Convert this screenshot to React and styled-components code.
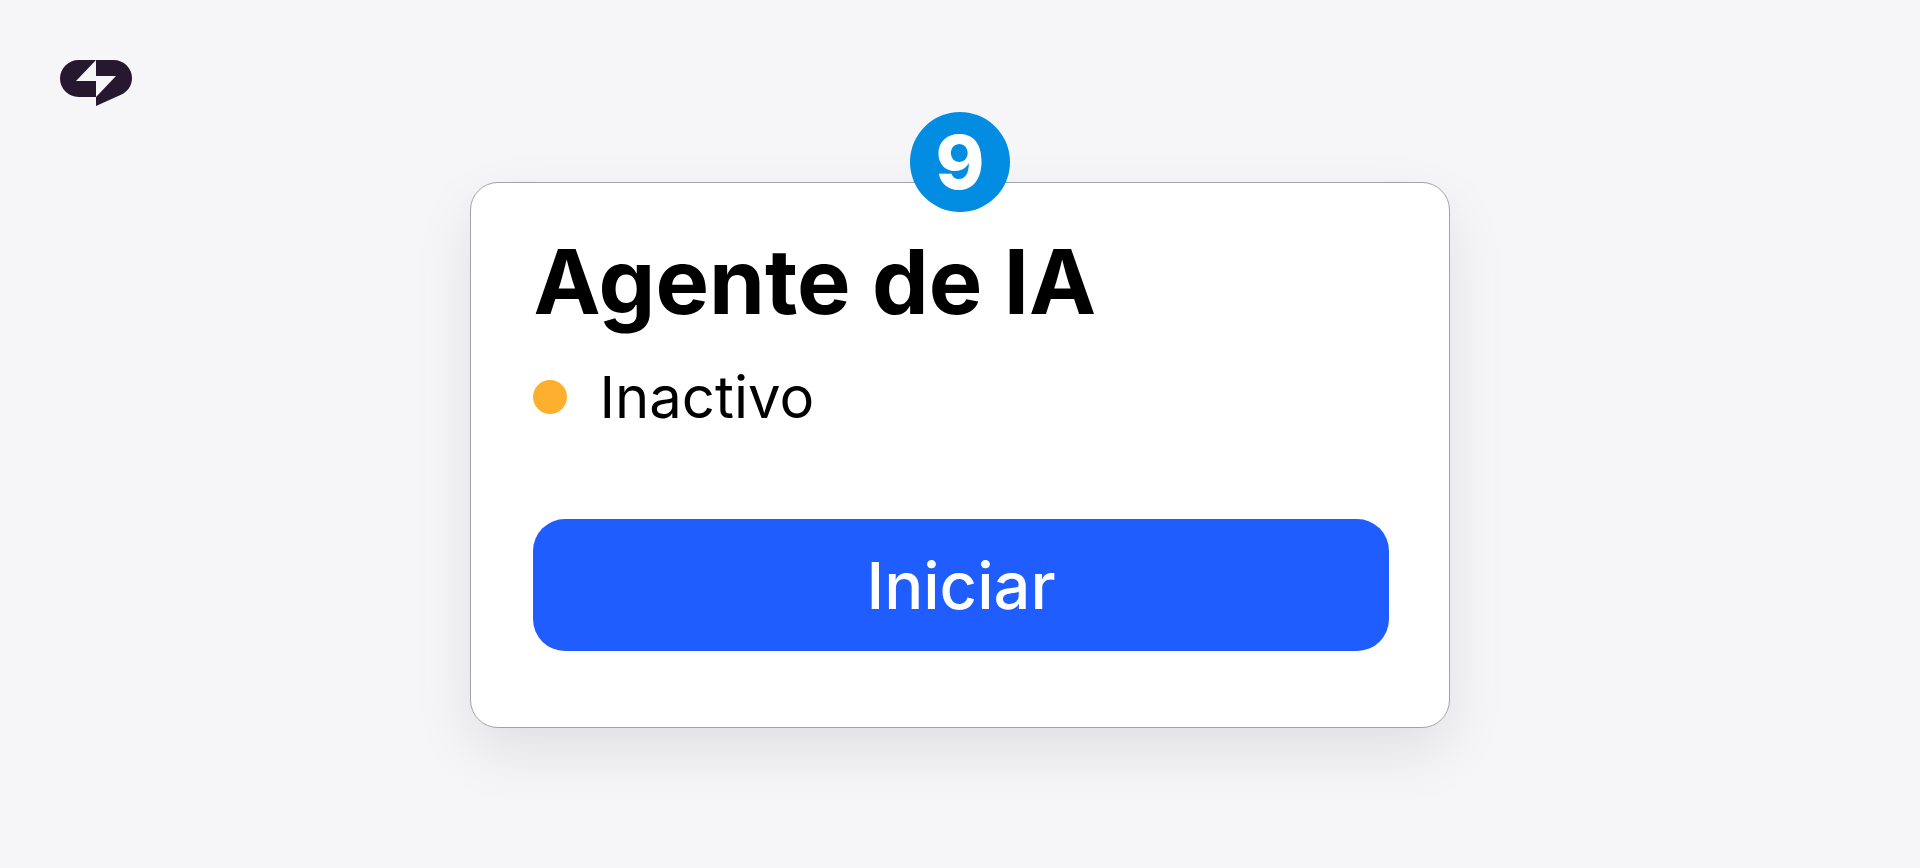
import React, { useState } from "react";
import styled, { createGlobalStyle } from "styled-components";

const GlobalStyle = createGlobalStyle`
  * {
    box-sizing: border-box;
  }

  body {
    margin: 0;
    background: #f6f6f9;
    font-family: Inter, "Liberation Sans", sans-serif;
  }
`;

const Wrapper = styled.div`
  display: flex;
  flex-direction: column;
  min-height: 100vh;
`;

const Header = styled.header`
  display: flex;
  padding: 60px 60px 0;
`;

const StyledLogo = styled.svg`
  width: 72px;
  height: 46px;
  fill: #26192f;
`;

const Main = styled.main`
  display: flex;
  justify-content: center;
  padding: 76px 0 80px;
`;

const Card = styled.section`
  position: relative;
  display: flex;
  flex-direction: column;
  width: 51%;
  min-width: 720px;
  padding: 44px 60px 76px 62px;
  background: #ffffff;
  border: 1px solid #a3a3a3;
  border-radius: 28px;
  box-shadow: 0 24px 60px rgba(0, 0, 0, 0.09);
`;

const StepBadge = styled.span`
  position: absolute;
  top: -71px;
  left: 50%;
  display: flex;
  justify-content: center;
  align-items: center;
  width: 100px;
  height: 100px;
  margin-left: -50px;
  border-radius: 50%;
  background: #028de3;
  color: #ffffff;
  font-size: 74px;
  font-weight: 800;
  line-height: 100px;
`;

const Title = styled.h1`
  margin: 0;
  color: #000000;
  font-size: 90px;
  font-weight: 700;
  line-height: 110px;
`;

const Status = styled.p`
  display: flex;
  align-items: center;
  gap: 32px;
  margin: 24px 0 86px;
  color: #000000;
  font-size: 58px;
  line-height: 72px;
`;

const StatusDot = styled.span`
  width: 34px;
  height: 34px;
  border-radius: 50%;
  background: ${(props) => (props.$active ? "#22c55e" : "#ffaf2e")};
`;

const StartButton = styled.button`
  height: 132px;
  padding: 0;
  border: none;
  border-radius: 32px;
  background: #1f5dff;
  color: #ffffff;
  font-family: inherit;
  font-size: 65px;
  font-weight: 500;
  cursor: pointer;
`;

const Logo = () => (
  <StyledLogo viewBox="0 0 72 46" role="img" aria-label="Logo">
    <path d="M36 0H18.5a18.5 18.5 0 0 0 0 37H36V21H16Z" />
    <path d="M36 0H53.5C63.7 0 72 8 72 18C72 25.5 68 31.5 61 34.8L36 46V37L56 16H36Z" />
  </StyledLogo>
);

const App = () => {
  const [active, setActive] = useState(false);

  return (
    <>
      <GlobalStyle />
      <Wrapper>
        <Header>
          <Logo />
        </Header>
        <Main>
          <Card>
            <StepBadge>9</StepBadge>
            <Title>Agente de IA</Title>
            <Status>
              <StatusDot $active={active} />
              {active ? "Activo" : "Inactivo"}
            </Status>
            <StartButton type="button" onClick={() => setActive(!active)}>
              {active ? "Detener" : "Iniciar"}
            </StartButton>
          </Card>
        </Main>
      </Wrapper>
    </>
  );
};

export default App;
